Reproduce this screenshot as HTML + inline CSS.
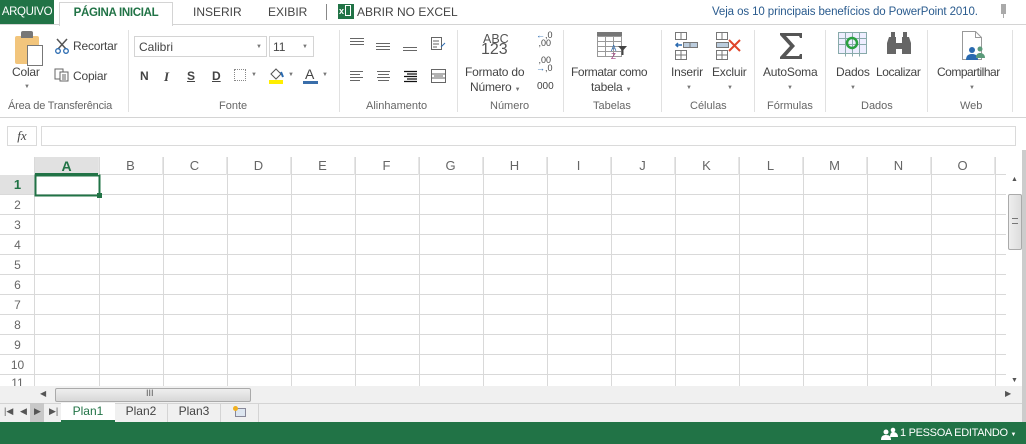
<!DOCTYPE html>
<html><head><meta charset="utf-8">
<style>
*{margin:0;padding:0;box-sizing:border-box}
body{width:1026px;height:444px;overflow:hidden;background:#fff;font-family:"Liberation Sans","DejaVu Sans",sans-serif;font-size:12px;color:#444;position:relative}
.a{position:absolute}
.t{position:absolute;white-space:nowrap}
.sep{position:absolute;top:30px;width:1px;height:82px;background:#e1e1e1}
.lbl{position:absolute;top:100px;font-size:11px;color:#666;white-space:nowrap}
.caret{font-size:6px;color:#777}
.rb{font-size:12px;letter-spacing:-0.2px}
.col{position:absolute;top:157px;height:18px;width:64px;text-align:center;font-size:13px;color:#666;line-height:18px;border-right:1px solid #e6e6e6}
.row{position:absolute;left:0;width:35px;height:20px;text-align:center;font-size:12px;color:#666;line-height:20px}
</style></head><body>

<!-- top tabs -->
<div class="a" style="left:0;top:0;width:1026px;height:25px;background:#fff;border-bottom:1px solid #d4d4d4"></div>
<div class="a" style="left:0;top:0;width:54px;height:24px;background:#217346;color:#fff;font-size:11.5px;letter-spacing:-0.4px;line-height:24px;text-align:center">ARQUIVO</div>
<div class="a" style="left:59px;top:2px;width:114px;height:24px;background:#fff;border:1px solid #d4d4d4;border-bottom:none;color:#217346;font-weight:bold;font-size:11.5px;letter-spacing:-0.3px;line-height:21px;text-align:center">PÁGINA INICIAL</div>
<div class="t" style="left:193px;top:5px;font-size:12px;color:#444">INSERIR</div>
<div class="t" style="left:268px;top:5px;font-size:12px;color:#444">EXIBIR</div>
<div class="a" style="left:326px;top:4px;width:1px;height:16px;background:#888"></div>
<div class="a" style="left:338px;top:4px;width:16px;height:15px;background:#217346;color:#fff;font-size:9px;font-weight:bold;line-height:15px;padding-left:1px">x<span style="display:inline-block;width:6px;height:11px;border:1px solid #fff;margin-left:1px;vertical-align:-2px"></span></div>
<div class="t" style="left:357px;top:5px;font-size:12px;color:#444">ABRIR NO EXCEL</div>
<div class="t" style="left:712px;top:6px;font-size:11.5px;color:#2a5b8e;letter-spacing:-0.1px">Veja os 10 principais benefícios do PowerPoint 2010.</div>
<div class="a" style="left:1001px;top:4px;width:5px;height:10px;background:#aaa"></div>
<div class="a" style="left:1003px;top:13px;width:1px;height:5px;background:#aaa"></div>

<!-- ribbon -->
<div class="a" style="left:0;top:117px;width:1026px;height:1px;background:#d4d4d4"></div>
<div class="sep" style="left:128px"></div><div class="sep" style="left:339px"></div><div class="sep" style="left:457px"></div>
<div class="sep" style="left:563px"></div><div class="sep" style="left:661px"></div><div class="sep" style="left:754px"></div>
<div class="sep" style="left:825px"></div><div class="sep" style="left:927px"></div><div class="sep" style="left:1012px"></div>

<!-- clipboard -->
<div class="a" style="left:15px;top:36px;width:24px;height:28px;background:#f2c57c;border-radius:2px"></div>
<div class="a" style="left:21px;top:31px;width:12px;height:7px;background:#777;border-radius:2px 2px 0 0"></div>
<div class="a" style="left:27px;top:45px;width:16px;height:21px;background:#fff;border:1px solid #777"></div>
<div class="t rb" style="left:12px;top:65px">Colar</div>
<div class="t caret" style="left:24px;top:84px">▼</div>
<svg class="a" style="left:54px;top:38px" width="16" height="16" viewBox="0 0 16 16"><path d="M3 1 L12 11 M13 1 L4 11" stroke="#555" stroke-width="1.5" fill="none"/><circle cx="4" cy="13" r="2.3" stroke="#2a6ab0" fill="none" stroke-width="1.3"/><circle cx="12" cy="13" r="2.3" stroke="#2a6ab0" fill="none" stroke-width="1.3"/></svg>
<div class="t rb" style="left:73px;top:39px">Recortar</div>
<svg class="a" style="left:54px;top:68px" width="16" height="14" viewBox="0 0 16 14"><rect x="1" y="1" width="8" height="10" stroke="#666" fill="#fff"/><rect x="6" y="4" width="8" height="9" stroke="#666" fill="#fff"/><path d="M8 7h4M8 9h4M8 11h4" stroke="#666"/></svg>
<div class="t rb" style="left:73px;top:69px">Copiar</div>
<div class="lbl" style="left:8px;letter-spacing:-0.2px">Área de Transferência</div>

<!-- font -->
<div class="a" style="left:134px;top:36px;width:133px;height:21px;border:1px solid #d4d4d4"></div>
<div class="t" style="left:139px;top:40px;font-size:12px">Calibri</div>
<div class="t caret" style="left:256px;top:44px">▼</div>
<div class="a" style="left:269px;top:36px;width:45px;height:21px;border:1px solid #d4d4d4"></div>
<div class="t" style="left:273px;top:40px;font-size:12px">11</div>
<div class="t caret" style="left:302px;top:44px">▼</div>
<div class="t" style="left:140px;top:69px;font-weight:bold;font-size:12px">N</div>
<div class="t" style="left:164px;top:69px;font-style:italic;font-family:'Liberation Serif',serif;font-weight:bold;font-size:13px">I</div>
<div class="t" style="left:187px;top:69px;font-weight:bold;text-decoration:underline;font-size:12px">S</div>
<div class="t" style="left:212px;top:69px;font-weight:bold;text-decoration:underline;font-size:12px">D</div>
<div class="a" style="left:234px;top:69px;width:12px;height:12px;border:1px dotted #888"></div>
<div class="t caret" style="left:251px;top:72px">▼</div>
<svg class="a" style="left:268px;top:66px" width="18" height="18" viewBox="0 0 18 18"><path d="M3 8 L8 3 L13 8 L8 13 Z" stroke="#555" fill="#fff"/><path d="M13 6 l2 5" stroke="#2a6ab0" stroke-width="2"/><rect x="1" y="14" width="14" height="4" fill="#ffee00"/></svg>
<div class="t caret" style="left:288px;top:72px">▼</div>
<div class="t" style="left:305px;top:66px;font-size:14px;color:#444">A</div>
<div class="a" style="left:303px;top:81px;width:15px;height:3px;background:#3a6eaa"></div>
<div class="t caret" style="left:322px;top:72px">▼</div>
<div class="lbl" style="left:219px">Fonte</div>

<!-- alignment -->
<svg class="a" style="left:348px;top:34px" width="110" height="55" viewBox="0 0 110 55">
<g stroke="#666" stroke-width="1"><path d="M2 4.5h14M2 7.5h14M2 10.5h14"/><path d="M28 9.5h14M28 12.5h14M28 15.5h14"/><path d="M55 13.5h14M55 16.5h14"/>
<path d="M2 37.5h13M2 40.5h10M2 43.5h13M2 46.5h10"/><path d="M29 37.5h13M30 40.5h11M29 43.5h13M30 46.5h11"/></g>
<g stroke="#111" stroke-width="1.2"><path d="M56 37.5h13M59 40h10M56 42.5h13M59 45h10M56 47.5h13"/></g>
<g stroke="#666" fill="none"><rect x="83.5" y="3.5" width="10" height="12"/><path d="M85 7h6M85 10h6M85 13h4"/><path d="M97 9 l-4 4" stroke="#2a6ab0"/>
<rect x="83.5" y="35.5" width="14" height="13"/><path d="M84 40h13M84 44h13M86 42h9" /></g></svg>
<div class="lbl" style="left:366px">Alinhamento</div>

<!-- number -->
<div class="t" style="left:483px;top:32px;font-size:12.5px;color:#555">ABC</div>
<div class="t" style="left:481px;top:41px;font-size:16px;color:#555">123</div>
<div class="t rb" style="left:465px;top:65px">Formato do</div>
<div class="t rb" style="left:470px;top:80px">Número <span class="caret">▼</span></div>
<div class="t" style="left:536px;top:31px;font-size:9px;color:#2a6ab0;line-height:8px">←<span style="color:#444">,0</span><br><span style="color:#444">&nbsp;,00</span></div>
<div class="t" style="left:536px;top:56px;font-size:9px;color:#444;line-height:8px">&nbsp;,00<br><span style="color:#2a6ab0">→</span>,0</div>
<div class="t" style="left:537px;top:81px;font-size:10px;color:#444">000</div>
<div class="lbl" style="left:490px">Número</div>

<!-- tables -->
<svg class="a" style="left:596px;top:31px" width="32" height="30" viewBox="0 0 32 30"><rect x="1" y="1" width="25" height="4" fill="#777"/><g stroke="#999" fill="none"><rect x="1.5" y="5.5" width="24" height="20"/><path d="M1 10.5h25M1 15.5h25M1 20.5h25M9.5 5v21M17.5 5v21"/></g><text x="15" y="20" font-size="8" fill="#2a6ab0" font-family="Liberation Sans">A</text><text x="15" y="28" font-size="8" fill="#a04080" font-family="Liberation Sans">Z</text><path d="M22 15h9l-3.5 4v5h-2v-5z" fill="#444"/></svg>
<div class="t rb" style="left:571px;top:65px;letter-spacing:-0.4px">Formatar como</div>
<div class="t rb" style="left:591px;top:80px">tabela <span class="caret">▼</span></div>
<div class="lbl" style="left:593px">Tabelas</div>

<!-- cells -->
<svg class="a" style="left:674px;top:31px" width="80" height="30" viewBox="0 0 80 30"><g stroke="#777" fill="#fff"><rect x="1.5" y="1.5" width="11" height="7"/><path d="M7 1.5v7"/><rect x="1.5" y="19.5" width="11" height="9"/><path d="M7 19.5v9M1.5 24h11"/><rect x="9.5" y="11.5" width="14" height="5" fill="#bcd"/><path d="M16 11.5v5"/>
<rect x="42.5" y="1.5" width="11" height="7"/><path d="M48 1.5v7"/><rect x="42.5" y="19.5" width="11" height="9"/><path d="M48 19.5v9M42.5 24h11"/><rect x="42.5" y="11.5" width="12" height="5" fill="#bcd"/></g><path d="M8 14h-6M4 12l-2 2 2 2" stroke="#2a6ab0" fill="none" stroke-width="1.5"/><path d="M55 9l11 11M66 9l-11 11" stroke="#e0442a" stroke-width="2"/></svg>
<div class="t rb" style="left:671px;top:65px">Inserir</div>
<div class="t caret" style="left:686px;top:85px">▼</div>
<div class="t rb" style="left:712px;top:65px">Excluir</div>
<div class="t caret" style="left:727px;top:85px">▼</div>
<div class="lbl" style="left:690px">Células</div>

<!-- formulas -->
<svg class="a" style="left:778px;top:31px" width="28" height="30" viewBox="0 0 28 30"><path d="M2 2h22v5h-2l-1-2H8l9 10-9 10h13l1-2h2v5H2v-2l10-11L2 4z" fill="#555"/></svg>
<div class="t rb" style="left:763px;top:65px">AutoSoma</div>
<div class="t caret" style="left:787px;top:85px">▼</div>
<div class="lbl" style="left:767px">Fórmulas</div>

<!-- data -->
<svg class="a" style="left:837px;top:31px" width="30" height="28" viewBox="0 0 30 28"><g stroke="#8aa" fill="#eef"><rect x="1.5" y="1.5" width="28" height="21"/><path d="M1.5 7.5h28M1.5 13.5h28M8.5 1.5v24M15.5 1.5v24M22.5 1.5v24" fill="none"/></g><circle cx="15" cy="12" r="5" fill="none" stroke="#2aa040" stroke-width="2.5"/></svg>
<svg class="a" style="left:886px;top:31px" width="26" height="24" viewBox="0 0 26 24"><path d="M3 6h7v17H1V12z M16 6h7l2 6v11h-9z M10 12h6v6h-6z M5 1h4v5H5z M17 1h4v5h-4z" fill="#666"/></svg>
<div class="t rb" style="left:836px;top:65px">Dados</div>
<div class="t caret" style="left:850px;top:85px">▼</div>
<div class="t rb" style="left:876px;top:65px;letter-spacing:-0.4px">Localizar</div>
<div class="lbl" style="left:861px">Dados</div>

<!-- web -->
<svg class="a" style="left:958px;top:30px" width="32" height="32" viewBox="0 0 32 32"><path d="M4.5 1.5h13l6 6v22h-19z" fill="#fff" stroke="#999"/><path d="M17.5 1.5v6h6" fill="none" stroke="#999"/><circle cx="14" cy="20" r="3" fill="#2a6ab0"/><path d="M8 30c0-5 3-6 6-6s6 1 6 6z" fill="#2a6ab0"/><circle cx="22" cy="19" r="2.5" fill="#5a9a7a"/><path d="M18 28c0-4 2-5 4-5s5 1 5 5z" fill="#5a9a7a"/></svg>
<div class="t rb" style="left:937px;top:65px;letter-spacing:-0.5px">Compartilhar</div>
<div class="t caret" style="left:969px;top:85px">▼</div>
<div class="lbl" style="left:960px">Web</div>

<!-- formula bar -->
<div class="a" style="left:0;top:118px;width:1026px;height:37px;background:#fff"></div>
<div class="a" style="left:7px;top:126px;width:30px;height:20px;border:1px solid #dadada;font-family:'Liberation Serif',serif;font-style:italic;font-size:13px;text-align:center;line-height:18px;color:#444">fx</div>
<div class="a" style="left:41px;top:126px;width:975px;height:20px;border:1px solid #dadada"></div>

<!-- grid -->
<svg class="a" style="left:0;top:157px" width="1006" height="229" viewBox="0 0 1006 229">
<rect x="35" y="0" width="64" height="18" fill="#e1e1e1"/>
<rect x="0" y="18" width="35" height="20" fill="#e1e1e1"/>
<g stroke="#d9d9d9" stroke-width="1">
<path d="M35 17.5H1006"/>
<path d="M0 37.5H1006M0 57.5H1006M0 77.5H1006M0 97.5H1006M0 117.5H1006M0 137.5H1006M0 157.5H1006M0 177.5H1006M0 197.5H1006M0 217.5H1006"/>
<path d="M34.5 0V229M99.5 0V229M163.5 0V229M227.5 0V229M291.5 0V229M355.5 0V229M419.5 0V229M483.5 0V229M547.5 0V229M611.5 0V229M675.5 0V229M739.5 0V229M803.5 0V229M867.5 0V229M931.5 0V229M995.5 0V229"/>
</g>
<rect x="35.5" y="18.5" width="64" height="20" fill="none" stroke="#217346" stroke-width="2"/>
<rect x="97" y="36" width="5" height="5" fill="#217346"/>
<path d="M35 17H99" stroke="#217346" stroke-width="2"/>
</svg>
<div class="col" style="left:35px;color:#217346;font-weight:bold;font-size:14px">A</div>
<div class="col" style="left:99px">B</div><div class="col" style="left:163px">C</div><div class="col" style="left:227px">D</div><div class="col" style="left:291px">E</div><div class="col" style="left:355px">F</div><div class="col" style="left:419px">G</div><div class="col" style="left:483px">H</div><div class="col" style="left:547px">I</div><div class="col" style="left:611px">J</div><div class="col" style="left:675px">K</div><div class="col" style="left:739px">L</div><div class="col" style="left:803px">M</div><div class="col" style="left:867px">N</div><div class="col" style="left:931px">O</div>
<div class="row" style="top:175px;color:#217346;font-weight:bold;font-size:13px">1</div>
<div class="row" style="top:195px">2</div><div class="row" style="top:215px">3</div><div class="row" style="top:235px">4</div><div class="row" style="top:255px">5</div><div class="row" style="top:275px">6</div><div class="row" style="top:295px">7</div><div class="row" style="top:315px">8</div><div class="row" style="top:335px">9</div><div class="row" style="top:355px">10</div><div class="row" style="top:373px;height:13px;overflow:hidden;line-height:20px">11</div>

<!-- vertical scrollbar -->
<div class="a" style="left:1006px;top:175px;width:20px;height:211px;background:#fff"></div>
<div class="t" style="left:1011px;top:176px;font-size:7px;color:#555">▲</div>
<div class="a" style="left:1008px;top:194px;width:14px;height:56px;background:linear-gradient(90deg,#eee,#ddd);border:1px solid #aaa;border-radius:2px"></div>
<div class="a" style="left:1012px;top:218px;width:6px;height:6px;border-top:1px solid #777;border-bottom:1px solid #777"></div>
<div class="t" style="left:1011px;top:377px;font-size:7px;color:#555">▼</div>
<div class="a" style="left:1022px;top:150px;width:4px;height:274px;background:#ccc"></div>

<!-- horizontal scrollbar -->
<div class="a" style="left:0;top:386px;width:1022px;height:17px;background:#f0f0f0"></div>
<div class="t" style="left:40px;top:389px;font-size:8px;color:#555">◀</div>
<div class="a" style="left:55px;top:388px;width:196px;height:14px;background:linear-gradient(#eee,#d8d8d8);border:1px solid #aaa;border-radius:2px"></div>
<div class="t" style="left:146px;top:388px;font-size:9px;color:#555">III</div>
<div class="t" style="left:1005px;top:389px;font-size:8px;color:#555">▶</div>

<!-- sheet tabs -->
<div class="a" style="left:0;top:403px;width:1022px;height:19px;background:#f0f0f0;border-top:1px solid #d4d4d4"></div>
<div class="t" style="left:4px;top:406px;font-size:9px;color:#555">|◀</div>
<div class="t" style="left:20px;top:406px;font-size:9px;color:#555">◀</div>
<div class="a" style="left:30px;top:403px;width:14px;height:19px;background:#c8c8c8"></div>
<div class="t" style="left:34px;top:406px;font-size:9px;color:#555">▶</div>
<div class="t" style="left:49px;top:406px;font-size:9px;color:#555">▶|</div>
<div class="a" style="left:61px;top:403px;width:54px;height:19px;background:#fff;border-bottom:2px solid #217346;color:#217346;font-size:12px;text-align:center;line-height:17px">Plan1</div>
<div class="a" style="left:115px;top:403px;width:53px;height:19px;border-right:1px solid #d4d4d4;font-size:12px;text-align:center;line-height:17px;color:#444">Plan2</div>
<div class="a" style="left:168px;top:403px;width:53px;height:19px;border-right:1px solid #d4d4d4;font-size:12px;text-align:center;line-height:17px;color:#444">Plan3</div>
<div class="a" style="left:221px;top:403px;width:38px;height:19px;border-right:1px solid #d4d4d4"></div>
<div class="a" style="left:235px;top:408px;width:11px;height:9px;background:#dde6f0;border:1px solid #889"></div>
<div class="a" style="left:233px;top:406px;width:5px;height:5px;background:#f0b020;border-radius:50%"></div>

<!-- status bar -->
<div class="a" style="left:0;top:422px;width:1026px;height:22px;background:#217346"></div>
<svg class="a" style="left:881px;top:427px" width="18" height="13" viewBox="0 0 18 13"><circle cx="5" cy="5" r="2.5" fill="#fff"/><path d="M0 13c0-4 2-5 5-5s5 1 5 5z" fill="#fff"/><circle cx="12" cy="3" r="2.3" fill="#fff"/><path d="M9 10c0-3 1-5 3-5s5 1 5 5z" fill="#fff"/></svg>
<div class="t" style="left:900px;top:427px;font-size:11px;letter-spacing:-0.3px;color:#fff">1 PESSOA EDITANDO <span style="font-size:6px">▼</span></div>
</body></html>
